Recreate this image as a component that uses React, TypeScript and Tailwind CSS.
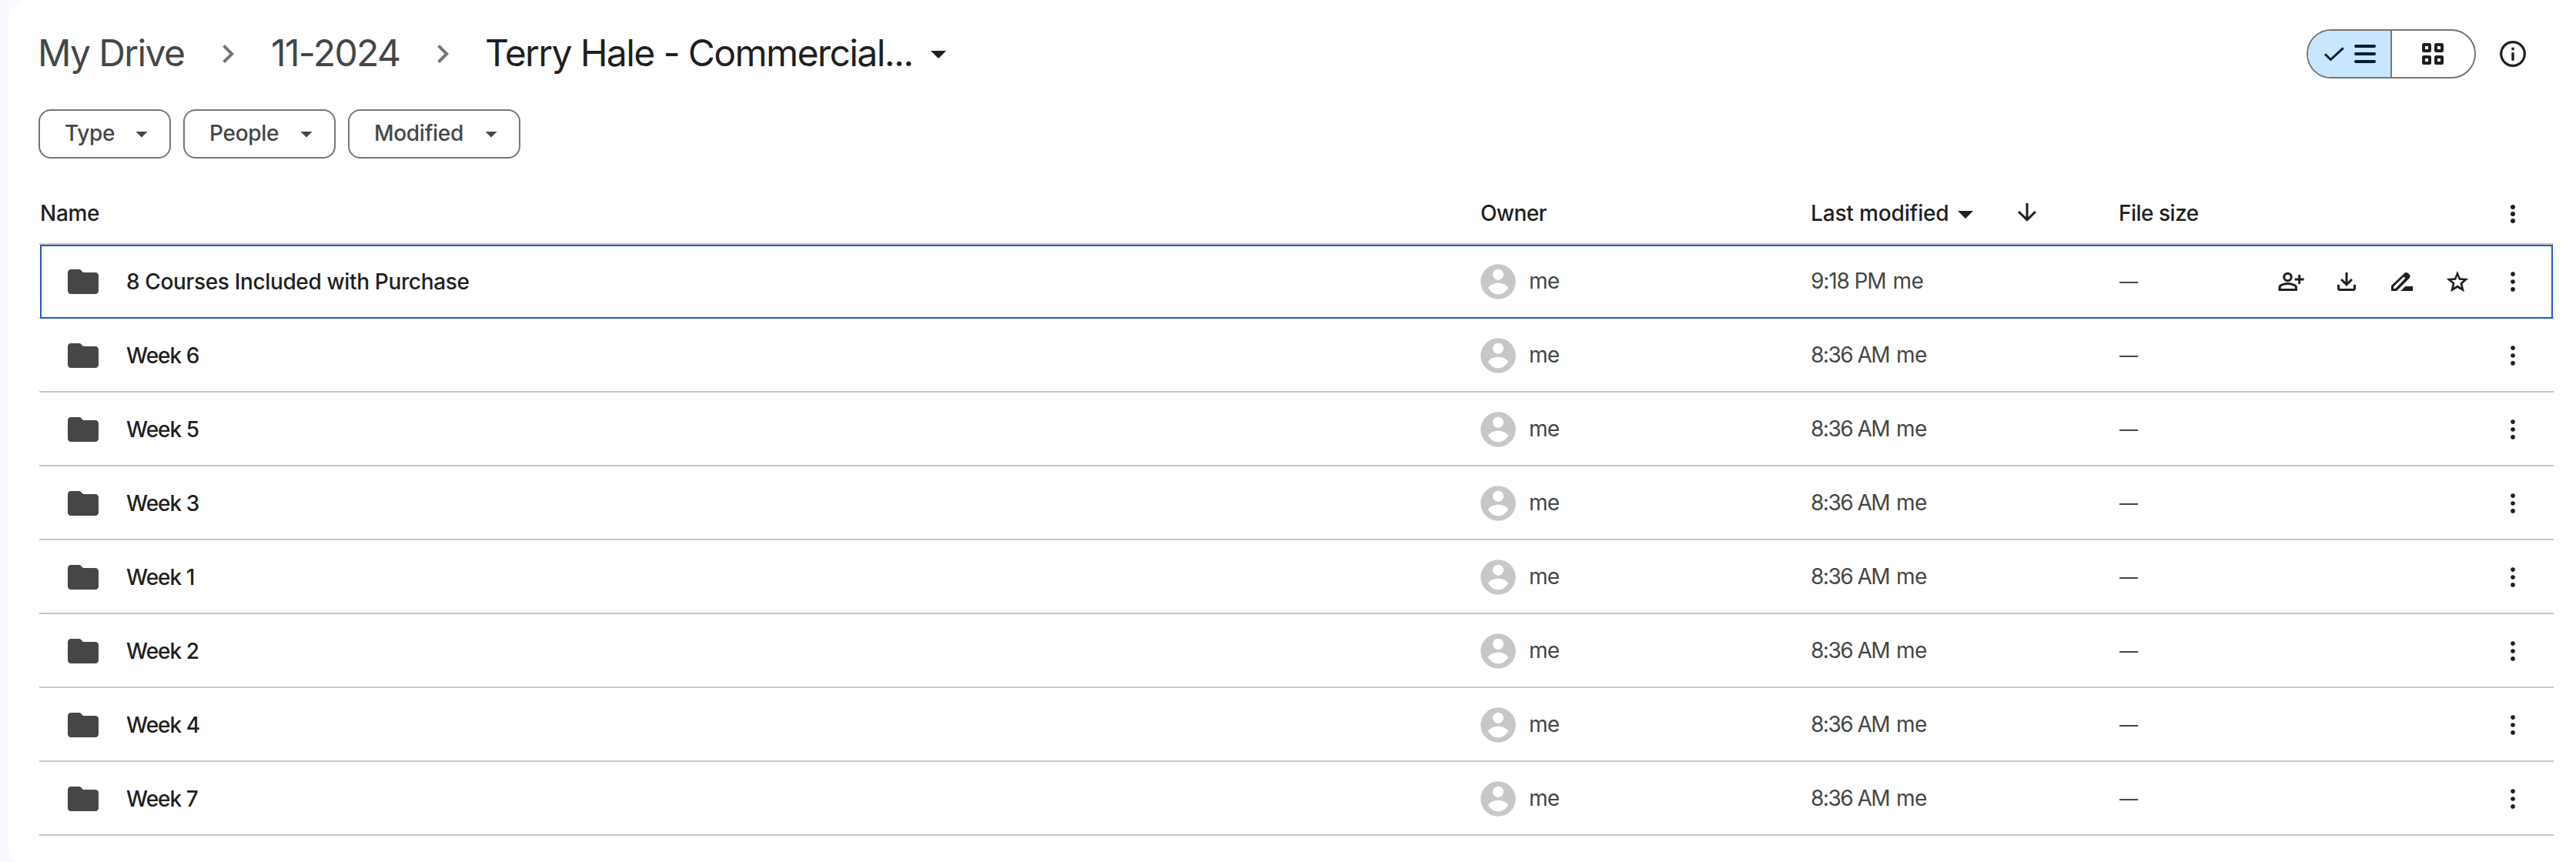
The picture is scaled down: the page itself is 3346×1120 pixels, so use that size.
import React from 'react';

interface FolderItem {
    name: string;
    time: string;
    active?: boolean;
}

const folders: FolderItem[] = [
    { name: '8 Courses Included with Purchase', time: '9:18 PM', active: true },
    { name: 'Week 6', time: '8:36 AM' },
    { name: 'Week 5', time: '8:36 AM' },
    { name: 'Week 3', time: '8:36 AM' },
    { name: 'Week 1', time: '8:36 AM' },
    { name: 'Week 2', time: '8:36 AM' },
    { name: 'Week 4', time: '8:36 AM' },
    { name: 'Week 7', time: '8:36 AM' },
];

const COLS = 'grid grid-cols-[1872px_428px_399px_1fr] items-center';

const Chevron = () => (
    <svg viewBox="0 0 24 24" className="w-12 h-12 shrink-0 fill-[#747775]">
        <path d="M10 6L8.59 7.41 13.17 12l-4.58 4.59L10 18l6-6z" />
    </svg>
);

const Caret = ({ className }: { className: string }) => (
    <svg viewBox="0 0 24 24" className={className}>
        <path d="M7 10l5 5 5-5z" />
    </svg>
);

const Chip = ({ label, className }: { label: string; className: string }) => (
    <button className={`${className} h-16 shrink-0 rounded-2xl border-2 border-[#747775] pl-8 pr-[18px] flex items-center justify-between text-[28px] leading-none font-medium tracking-[-0.3px] text-[#444746]`}>
        <span className="pb-[2px]">{label}</span>
        <Caret className="w-9 h-9 fill-[#444746]" />
    </button>
);

const ViewToggle = () => (
    <div className="w-[220px] h-16 rounded-full border-2 border-[#747775] flex overflow-hidden">
        <button className="w-[109px] border-r-2 border-[#747775] bg-[#c8e6fd] pl-5 flex items-center gap-3">
            <svg viewBox="0 0 28 28" className="w-7 h-7">
                <path d="M2 14.3l7.3 7.2L25.7 6.4" fill="none" stroke="#001d35" strokeWidth="2.9" />
            </svg>
            <svg viewBox="0 0 28 24" className="w-7 h-6 fill-[#001d35]">
                <rect width="28" height="4" rx="2" />
                <rect y="10" width="28" height="4" rx="2" />
                <rect y="20" width="28" height="4" rx="2" />
            </svg>
        </button>
        <button className="flex-1 flex items-center justify-center pr-px">
            <svg viewBox="0 0 28 28" className="w-7 h-7" fill="none" stroke="#1f1f1f" strokeWidth="4">
                <rect x="2" y="2" width="8" height="8" rx="0.5" strokeLinejoin="round" />
                <rect x="18" y="2" width="8" height="8" rx="0.5" strokeLinejoin="round" />
                <rect x="2" y="18" width="8" height="8" rx="0.5" strokeLinejoin="round" />
                <rect x="18" y="18" width="8" height="8" rx="0.5" strokeLinejoin="round" />
            </svg>
        </button>
    </div>
);

const InfoIcon = () => (
    <svg viewBox="0 0 40 40" className="w-10 h-10 ml-7 fill-[#1f1f1f]">
        <circle cx="20" cy="20" r="15.3" fill="none" stroke="#1f1f1f" strokeWidth="3.2" />
        <rect x="18.3" y="11.7" width="3.4" height="3.4" />
        <rect x="18.3" y="18.3" width="3.4" height="10.4" />
    </svg>
);

const FolderIcon = () => (
    <svg viewBox="0 0 24 24" className="w-12 h-12 fill-[#444746]">
        <path d="M10 4H4c-1.1 0-1.99.9-1.99 2L2 18c0 1.1.9 2 2 2h16c1.1 0 2-.9 2-2V8c0-1.1-.9-2-2-2h-8l-2-2z" />
    </svg>
);

const Avatar = () => (
    <svg viewBox="0 0 46 46" className="w-[46px] h-[46px]">
        <circle cx="23" cy="23" r="22.8" fill="#c7c7c7" />
        <circle cx="23" cy="13.8" r="7.1" fill="#fff" />
        <path d="M9.8 30.7C12.5 27 17.5 24.7 23 24.7s10.5 2.3 13.2 6C33.6 35.6 28.6 39.3 23 39.3s-10.6-3.7-13.2-8.6z" fill="#fff" />
    </svg>
);

// Each icon sits in a 72px wide hit area
const Action = ({ children }: { children: React.ReactNode }) => (
    <button className="w-[72px] h-[72px] flex items-center justify-center">
        <svg viewBox="0 0 40 40" className="w-10 h-10 fill-[#1f1f1f]" fillRule="evenodd">{children}</svg>
    </button>
);

const Row = ({ item }: { item: FolderItem }) => (
    <div className={`${COLS} relative h-24 border-b-2 border-[#c7c7c7] pt-[2px] text-[28px] leading-none text-[#444746]`}>
        <div className="flex items-center pl-[33px]">
            <FolderIcon />
            <span className={`ml-8 font-medium text-[#1f1f1f] ${item.active ? 'tracking-[-0.36px]' : 'tracking-[-1px]'}`}>{item.name}</span>
        </div>
        <div className="flex items-center gap-[17px]">
            <Avatar />
            <span className="pb-[2px] tracking-[-0.8px]">me</span>
        </div>
        <div className="flex items-center gap-[9px] pb-[2px] pl-px">
            <span className={item.active ? 'tracking-[-1.1px]' : 'tracking-[-1.5px]'}>{item.time}</span>
            <span className="tracking-[-0.5px]">me</span>
        </div>
        <div className="flex items-center">
            <span className="text-[24px] pl-[3px]">—</span>
            <div className="ml-auto mr-[17px] flex">
                {item.active && (
                    <>
                        <Action>
                            <circle cx="15.5" cy="14" r="4.7" fill="none" stroke="#1f1f1f" strokeWidth="3" />
                            <path d="M3.5 32V27.5C3.5 25.8 4.4 24.4 5.8 23.6 8.8 22 12 21 15.6 21s6.8 1 9.8 2.6C26.9 24.4 28 25.8 28 27.5V32zM6.7 29H25v-1.4c0-.7-.4-1.2-1-1.5C21.5 24.8 18.6 24 15.6 24s-5.9.8-8.2 2.1c-.5.3-.7.8-.7 1.5z" />
                            <path d="M30.7 11v12M24.7 17h12" stroke="#1f1f1f" strokeWidth="3" />
                        </Action>
                        <Action>
                            <path d="M20 26L12 18l2.12-2.12L18.5 20.2V8h3v12.2l4.38-4.32L28 18zM11 32q-1.24 0-2.12-.88T8 29V24h3v5h18V24h3v5q0 1.24-.88 2.12T29 32z" />
                        </Action>
                        <Action>
                            <path d="M6 32v-6.7L23.2 8.9q2-1.9 4.4-.2l2.1 2.1q1.9 2.2.1 4.4L13 32zM9 29h2.4L24.4 15.6l-2.2-2.2L9 26.6z" />
                            <path d="M18.3 32l6-6H34v6z" />
                        </Action>
                        <Action>
                            <path d="M20 6l3.7 9.2 10.6.8-7.9 6.8 2.5 10.5L20 28l-8.9 5.3 2.5-10.5L5.7 16l10.6-.8zM20 12.6l-2 5.1-5.7.5 4.3 3.6-1.4 5.7 4.8-2.9 4.8 2.9-1.4-5.7 4.3-3.6-5.7-.5z" />
                        </Action>
                    </>
                )}
                <Action>
                    <circle cx="20" cy="10.1" r="2.8" />
                    <circle cx="20" cy="20" r="2.8" />
                    <circle cx="20" cy="29.9" r="2.8" />
                </Action>
            </div>
        </div>
        {item.active && <div className="absolute inset-x-px top-0 -bottom-[2px] border-2 border-[#2656c8]" />}
    </div>
);

export default function App() {
    return (
        <div className="w-[3346px] h-[1120px] overflow-hidden bg-[#f8faff] pl-[10px] font-['Inter',sans-serif]">
            <div className="w-[3351px] h-[1130px] -mt-[2px] rounded-[32px] bg-white pt-10 pl-[41px]">
                <div className="w-[3266px]">
                    {/* Breadcrumbs and view controls */}
                    <div className="h-16 flex items-center -ml-[3px] text-5xl leading-none tracking-[-1.6px] text-[#444746] whitespace-nowrap">
                        <span className="w-[224px] pl-px pb-[2px]">My Drive</span>
                        <Chevron />
                        <span className="ml-8 w-[199px] pb-[2px]">11-2024</span>
                        <Chevron />
                        <span className="ml-[31px] w-[565px] pb-[2px] text-[#1f1f1f]">Terry Hale - Commercial...</span>
                        <Caret className="w-12 h-12 fill-[#1f1f1f]" />
                        <div className="ml-auto mr-[33px] flex items-center">
                            <ViewToggle />
                            <InfoIcon />
                        </div>
                    </div>

                    {/* Filters */}
                    <div className="mt-10 -ml-px flex gap-4">
                        <Chip label="Type" className="w-[172px]" />
                        <Chip label="People" className="w-[198px]" />
                        <Chip label="Modified" className="w-[224px]" />
                    </div>

                    {/* Column titles */}
                    <div className={`${COLS} h-28 pt-8 border-b-2 border-[#c7c7c7] text-[28px] leading-none font-medium tracking-[-0.3px] text-[#1f1f1f]`}>
                        <span className="pl-px">Name</span>
                        <span className="tracking-[-0.6px]">Owner</span>
                        <div className="flex items-center">
                            <span className="w-[178px] pl-px whitespace-nowrap tracking-[-0.15px]">Last modified</span>
                            <Caret className="w-12 h-12 mt-[2px] fill-[#1f1f1f]" />
                            <svg viewBox="0 0 32 32" className="w-8 h-8 ml-10 mt-[2px]" fill="none" stroke="#1f1f1f" strokeWidth="3">
                                <path d="M16 2v22M5 13l11 10.7L27 13" />
                            </svg>
                        </div>
                        <div className="flex items-center">
                            <span className="pl-[2px] tracking-[-0.5px]">File size</span>
                            <svg viewBox="0 0 36 36" className="w-9 h-9 ml-auto mr-[35px] mt-[2px] fill-[#1f1f1f]">
                                <circle cx="18" cy="9" r="3" />
                                <circle cx="18" cy="18" r="3" />
                                <circle cx="18" cy="27" r="3" />
                            </svg>
                        </div>
                    </div>

                    {folders.map((f) => <Row key={f.name} item={f} />)}
                </div>
            </div>
        </div>
    );
}
